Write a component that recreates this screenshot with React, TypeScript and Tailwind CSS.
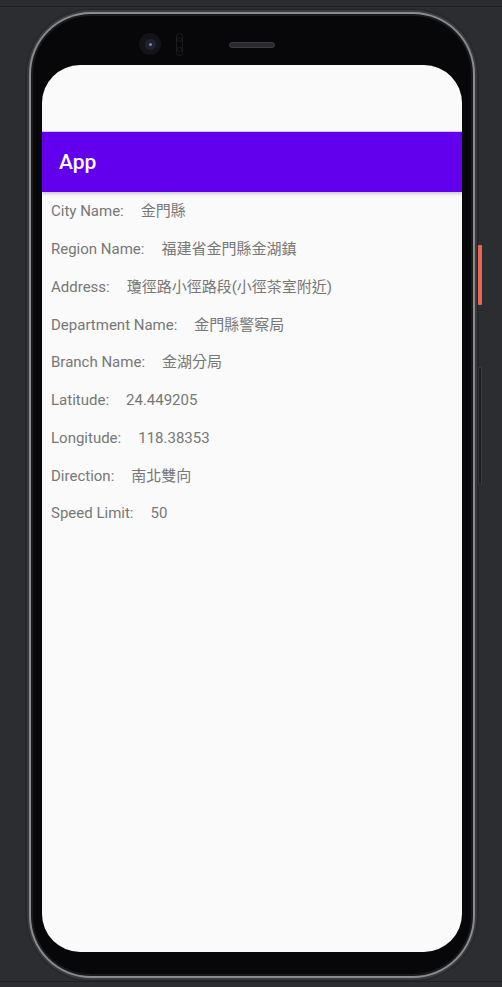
import React from "react";

const rows: [string, string][] = [
  ["City Name:", "金門縣"],
  ["Region Name:", "福建省金門縣金湖鎮"],
  ["Address:", "瓊徑路小徑路段(小徑茶室附近)"],
  ["Department Name:", "金門縣警察局"],
  ["Branch Name:", "金湖分局"],
  ["Latitude:", "24.449205"],
  ["Longitude:", "118.38353"],
  ["Direction:", "南北雙向"],
  ["Speed Limit:", "50"],
];

export default function App() {
  return (
    <div className="w-[502px] h-[987px] bg-[#2b2d30] overflow-hidden relative" style={{ fontFamily: "Roboto, 'Noto Sans CJK TC', sans-serif" }}>
      <div className="h-[7px] border-b border-[#1f2023]" />
      <div className="relative ml-[27px] mt-[3px] w-[450px] h-[970px] rounded-[64px] bg-[#3a3b3e] p-[2px] shadow-[0_0_2px_rgba(0,0,0,0.6)]">
        <div className="w-full h-full rounded-[62px] bg-[#8a8b8e] p-[2px]">
          <div className="w-full h-full rounded-[60px] bg-[#1b1b1d] p-[2px]">
            <div className="w-full h-full rounded-[58px] bg-[#070709] flex flex-col pl-[9px] pr-[8px] pt-[8px] pb-[22px]">
              <div className="h-[41px] flex items-center relative shrink-0">
                <div className="absolute left-[97px] top-[9px] w-[22px] h-[22px] rounded-full bg-[#141418] flex items-center justify-center">
                  <div className="w-[11px] h-[11px] rounded-full bg-[#1f2230] flex items-center justify-center">
                    <div className="w-[3px] h-[3px] rounded-full bg-[#7a86b8]" />
                  </div>
                </div>
                <div className="absolute left-[134px] top-[9px] w-[7px] h-[23px] rounded-full border border-[#1c1c20] flex flex-col justify-around items-center py-[1px]">
                  <div className="w-[5px] h-[5px] rounded-full border border-[#1c1c20]" />
                  <div className="w-[5px] h-[5px] rounded-full border border-[#1c1c20]" />
                </div>
                <div className="absolute left-[187px] top-[18px] w-[46px] h-[6px] rounded-full bg-[#2a2a2e] border border-[#3c3c40]" />
              </div>
              <div className="w-[420px] h-[888px] rounded-[38px] bg-[#fafafa] overflow-hidden flex flex-col">
                <div className="h-[67px] shrink-0 border-b border-[#d8ccf8]" />
                <div className="h-[60px] shrink-0 bg-[#6200ee] flex items-center pl-[17px] shadow-[0_2px_3px_rgba(0,0,0,0.18)]">
                  <span className="text-white text-[21px] font-medium leading-none mt-[1px]">App</span>
                </div>
                <div className="flex flex-col pl-[9px] pt-[1px]">
                  {rows.map(([l, v]) => (
                    <div key={l} className="h-[37.75px] flex items-center text-[15px] text-[#777777] leading-none">
                      <span>{l}</span>
                      <span className="ml-[17px]">{v}</span>
                    </div>
                  ))}
                </div>
              </div>
            </div>
          </div>
        </div>
        <div className="absolute left-[451px] top-[235px] w-[4px] h-[60px] bg-[#e8674f] rounded-[1px]" />
        <div className="absolute left-[451px] top-[357px] w-[4px] h-[118px] bg-[#1e1f21] border border-[#3a3b3e] rounded-[1px]" />
      </div>
      <div className="absolute left-0 top-[981px] w-full h-[6px] border-t border-[#1f2023]" />
    </div>
  );
}
